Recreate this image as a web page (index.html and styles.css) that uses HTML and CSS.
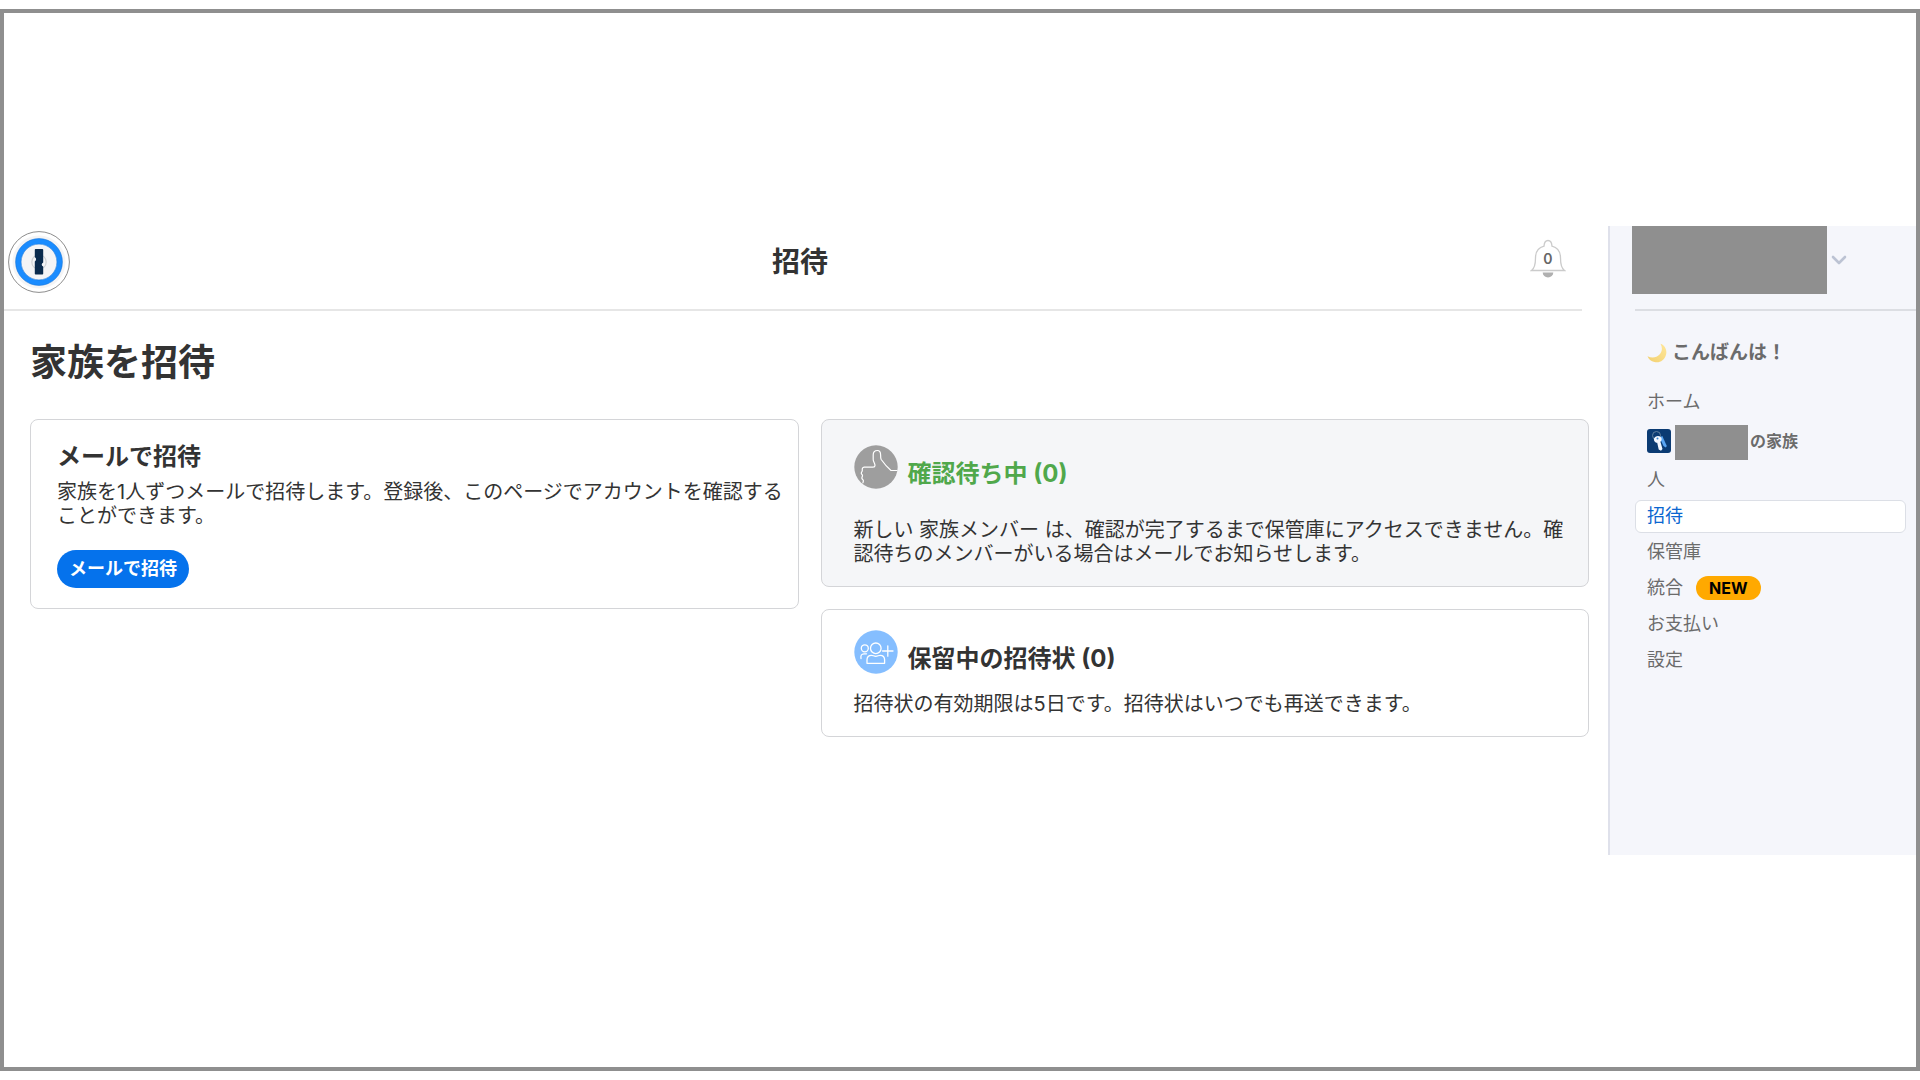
FILE: index.html
```html
<!DOCTYPE html>
<html lang="ja">
<head>
<meta charset="utf-8">
<meta name="viewport" content="width=device-width, initial-scale=1">
<title>招待</title>
<link rel="stylesheet" href="styles.css">
</head>
<body>
<div class="frame">
  <div class="app">
    <main class="main">
      <header class="topbar">
        <a class="logo" href="#" aria-label="1Password">
          <svg viewBox="0 0 62 62" width="62" height="62" aria-hidden="true">
            <circle cx="31" cy="31" r="30.4" fill="#fff" stroke="#8c8c8c" stroke-width="1"/>
            <circle cx="31" cy="31" r="26.5" fill="#f4f4f5"/>
            <circle cx="31" cy="31" r="20.7" fill="#f4f4f6" stroke="#1a8cff" stroke-width="5.4"/>
            <circle cx="31" cy="31" r="23.400" fill="none" stroke="#1976d8" stroke-width=".6"/>
            <circle cx="31" cy="31" r="17.900" fill="none" stroke="#1976d8" stroke-width=".6"/>
            <circle cx="31" cy="31" r="7.200" fill="none" stroke="#cfd1d4" stroke-width="1.200"/>
            <path d="M27.600 18h6.800q.8 0 .8.8v12.600q-1.500.7-1.500 2.200t1.500 2v7.200q0 .8-.8.8h-6.800q-.8 0-.8-.8V30.400q1.300-.7 1.300-2.100t-1.300-2v-7.500q0-.8.8-.8z" fill="#0a2a4d"/>
          </svg>
        </a>
        <p class="page-name">招待</p>
        <button class="bell" type="button" aria-label="通知">
          <svg viewBox="0 0 36 40" width="36" height="40" aria-hidden="true">
            <path d="M1.500 31.500c3.500-2.500 4-6.500 4-12.500C5.500 12.500 9 8.500 14 7.200 14.300 3 15.500 1.500 18 1.500s3.700 1.500 4 5.700c5 1.300 8.500 5.300 8.500 11.800 0 6 .5 10 4 12.500z" fill="#fff" stroke="#cbcbcb" stroke-width="1.300"/>
            <path d="M12.700 33.500h10.600a5.300 5 0 0 1-10.600 0z" fill="#b0b0b0"/>
          </svg>
          <span class="bell-count">0</span>
        </button>
      </header>

      <section class="content">
        <h1 class="heading">家族を招待</h1>
        <div class="columns">
          <article class="card card-invite">
            <h2 class="card-title">メールで招待</h2>
            <p class="card-text">家族を1人ずつメールで招待します。登録後、このページでアカウントを確認することができます。</p>
            <button class="invite-button" type="button">メールで招待</button>
          </article>
          <div class="stack">
            <article class="card card-confirm">
              <div class="card-head">
                <svg viewBox="0 0 44 44" width="44" height="44" aria-hidden="true">
                  <circle cx="22" cy="22" r="21.700" fill="#9e9e9e"/>
                  <path d="M43.500 25.500H37c-3.500-3-7-7-9.800-11-.6-1-.6-2-.6-4.500 0-3-1.100-4.500-3.200-4.500-3 0-4.200 1.500-4.200 4.500v4.500c0 2.500 1.800 3.500 1.800 6 0 1.200-.8 1.700-2 1.700-3.500-.2-6-.2-8.800 0-1.900.2-2.100 1.600-1.900 3.100.2 1.200-1.200 1.700-1 3 .2 1.200 1.400 1.300 1.200 2.500s-.8 1.300-.6 2.500 1.600 1.200 1.500 2.500-.8 1.500-.3 2.500" fill="none" stroke="#fff" stroke-width="1.200" stroke-linejoin="round"/>
                </svg>
                <h2 class="card-title card-title-green">確認待ち中 (0)</h2>
              </div>
              <p class="card-text">新しい 家族メンバー は、確認が完了するまで保管庫にアクセスできません。確認待ちのメンバーがいる場合はメールでお知らせします。</p>
            </article>
            <article class="card card-pending">
              <div class="card-head">
                <svg viewBox="0 0 44 44" width="44" height="44" aria-hidden="true">
                  <circle cx="22" cy="22" r="21.700" fill="#85beff"/>
                  <g fill="none" stroke="#fff" stroke-width="1.300" stroke-linecap="round" stroke-linejoin="round">
                    <circle cx="21.800" cy="18.300" r="5.300"/>
                    <circle cx="10.800" cy="18.300" r="3.500"/>
                    <path d="M13 33.300v-3.500c0-3 1.500-4.500 4.500-4.500 1.500 0 2.500 1 4.300 1s2.800-1 4.300-1c3 0 4.500 1.500 4.500 4.500v3.500zM7 28.500c-.5-3 .5-4.700 3-4.700h2.500M33.800 15.800v10.400M28.600 21H39"/>
                  </g>
                </svg>
                <h2 class="card-title">保留中の招待状 (0)</h2>
              </div>
              <p class="card-text">招待状の有効期限は5日です。招待状はいつでも再送できます。</p>
            </article>
          </div>
        </div>
      </section>
    </main>

    <aside class="sidebar">
      <button class="account" type="button" aria-label="アカウントメニュー">
        <span class="account-mask"></span>
        <svg viewBox="0 0 16 10" width="16" height="10" aria-hidden="true">
          <path d="M2 2l6 6 6-6" fill="none" stroke="#bcc3d3" stroke-width="2.600" stroke-linecap="round" stroke-linejoin="round"/>
        </svg>
      </button>
      <p class="greeting">
        <svg viewBox="0 0 20 20" width="20" height="20" aria-hidden="true">
          <defs><linearGradient id="moon" x1="0" y1="1" x2="1" y2="0"><stop offset="0" stop-color="#f2d070"/><stop offset="1" stop-color="#ffe79a"/></linearGradient></defs>
          <path d="M13.500.8C18 2.500 20.300 7 19 11.800 17.500 17.500 12.500 20.300 7.500 19 4 18.200 1.500 16 .5 13.200c4.500 2.200 9 1.500 12-1.700 2.700-3 3.200-6.700 1-10.700z" fill="url(#moon)"/>
        </svg>
        こんばんは！
      </p>
      <nav class="nav">
        <a class="nav-item" href="#">ホーム</a>
        <p class="family">
          <svg viewBox="0 0 24 24" width="24" height="24" aria-hidden="true">
            <rect width="24" height="24" rx="3" fill="#0b3b73"/>
            <circle cx="9.500" cy="6.500" r="4" fill="none" stroke="#61809f" stroke-width="1"/>
            <path d="M12.500 8.500l2.800-1.500 4.500 10-1 1.500-2.300-1.500z" fill="#5aa5f2"/>
            <path d="M8.500 7.800c2-1.500 5-.9 5.900 1.200.6 1.500.1 2.900-1 3.800l2.100 7.300-1.500 1.700-2.300-1.300-1.500-6.700c-1.600-.1-2.800-1-3.200-2.600-.3-1.400.3-2.700 1.500-3.400z" fill="#f2f7ff"/>
            <circle cx="10.500" cy="9.500" r="1" fill="#3a83cc"/>
          </svg>
          <span class="family-mask"></span>
          <span class="family-name">の家族</span>
        </p>
        <a class="nav-item" href="#">人</a>
        <a class="nav-item nav-item-current" href="#" aria-current="page">招待</a>
        <a class="nav-item" href="#">保管庫</a>
        <a class="nav-item" href="#">統合 <span class="badge">NEW</span></a>
        <a class="nav-item" href="#">お支払い</a>
        <a class="nav-item" href="#">設定</a>
      </nav>
    </aside>
  </div>
</div>
</body>
</html>
```
FILE: styles.css
```css
* {
  box-sizing: border-box;
}

body {
  margin: 0;
  background: #fff;
  color: #333;
  font-family: Inter, "Noto Sans CJK JP", sans-serif;
  font-size: 20px;
  line-height: 24px;
}

h1,
h2,
p {
  margin: 0;
}

button {
  border: 0;
  padding: 0;
  background: none;
  color: inherit;
  font: inherit;
  cursor: pointer;
}

a {
  color: inherit;
  text-decoration: none;
}

svg {
  display: block;
  flex: none;
}

/* Outer frame, with the app centred in it */
.frame {
  display: flex;
  flex-direction: column;
  justify-content: center;
  min-height: calc(100vh - 18px);
  margin: 9px 0;
  border: 4px solid #8f8f8f;
}

.app {
  display: grid;
  grid-template-columns: minmax(0, 1fr) 308px;
}

/* Top bar */
.topbar {
  display: flex;
  align-items: center;
  justify-content: space-between;
  margin-right: 26px;
  padding: 5px 16px 16px 4px;
  border-bottom: 2px solid #e6e6e6;
}

.page-name {
  font-size: 28px;
  font-weight: 700;
  line-height: 32px;
}

.bell {
  display: grid;
  place-items: center;
  padding-bottom: 6px;
}

.bell > * {
  grid-area: 1 / 1;
}

.bell-count {
  color: #666;
  font-size: 14px;
  font-weight: 600;
  line-height: 16px;
}

/* Page content */
.content {
  padding: 30px 19px 30px 26px;
}

.heading {
  margin-bottom: 34px;
  font-size: 37px;
  font-weight: 700;
  line-height: 44px;
}

.columns {
  display: grid;
  grid-template-columns: repeat(2, minmax(0, 1fr));
  align-items: start;
  gap: 22px;
}

.stack {
  display: grid;
  gap: 22px;
}

.card {
  border: 1px solid #d4d5d8;
  border-radius: 8px;
}

.card-invite {
  padding: 22px 14px 20px 26px;
}

.card-confirm {
  padding: 25px 14px 20px 32px;
  background: #f5f6f8;
}

.card-pending {
  padding: 20px 14px 20px 32px;
}

.card-head {
  display: flex;
  align-items: flex-end;
  gap: 10px;
}

.card-title {
  font-size: 24px;
  font-weight: 700;
  line-height: 30px;
}

.card-title-green {
  color: #50a84b;
}

.card-invite .card-text {
  margin: 8px 0 22px;
}

.card-confirm .card-text {
  margin-top: 29px;
}

.card-pending .card-text {
  margin-top: 18px;
}

.invite-button {
  padding: 0 12px;
  border-radius: 19px;
  background: #0572ec;
  color: #fff;
  font-size: 18px;
  font-weight: 700;
  line-height: 38px;
}

/* Sidebar */
.sidebar {
  padding: 0 0 178px 24px;
  border-left: 2px solid #dfe1eb;
  background: #f5f6fb;
  color: #6b6b6b;
}

.account {
  display: flex;
  align-items: center;
  gap: 4px;
  width: 100%;
  margin-left: -2px;
  padding-bottom: 15px;
}

.account-mask {
  width: 195px;
  height: 68px;
  background: #8f8f8f;
}

.greeting {
  display: flex;
  align-items: center;
  gap: 5px;
  margin-left: 1px;
  padding: 30px 0 21px 12px;
  border-top: 2px solid #dcdee3;
  font-size: 19px;
  font-weight: 700;
}

.nav {
  display: grid;
  gap: 3px;
  margin: 0 10px 0 1px;
  font-size: 18px;
}

.nav-item {
  display: flex;
  align-items: center;
  gap: 13px;
  height: 33px;
  padding: 0 11px;
  border: 1px solid transparent;
  border-radius: 6px;
}

.nav-item-current {
  border-color: #dcdfe6;
  background: #fff;
  color: #0a66d0;
}

.badge {
  padding: 0 13px;
  border-radius: 12px;
  background: #ffa900;
  color: #000;
  font-size: 16px;
  font-weight: 700;
  line-height: 24px;
}

.family {
  display: flex;
  align-items: center;
  height: 39px;
  padding-left: 12px;
}

.family-mask {
  width: 73px;
  height: 35px;
  margin: 3px 2px 0 4px;
  background: #8f8f8f;
}

.family-name {
  font-size: 16px;
  font-weight: 700;
}
```
